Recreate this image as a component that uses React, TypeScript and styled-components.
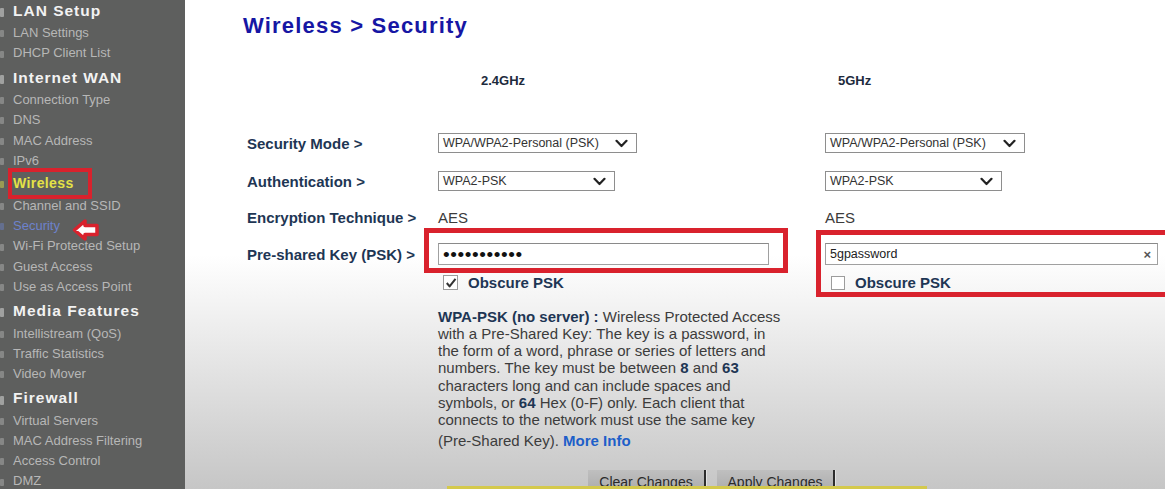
import React from "react";
import styled, { createGlobalStyle } from "styled-components";

const GlobalStyle = createGlobalStyle`
  html, body {
    margin: 0;
    padding: 0;
    width: 1165px;
    height: 489px;
    overflow: hidden;
    background: #ffffff;
  }
  #root { height: 489px; }
  body { font-family: "Liberation Sans", Arial, sans-serif; }
`;

const Page = styled.div`
  display: flex;
  width: 1165px;
  height: 489px;
  overflow: hidden;
`;

/* ---------- Sidebar ---------- */

type NavKind = "heading" | "item" | "active" | "current";

const Sidebar = styled.nav`
  flex: 0 0 185px;
  width: 185px;
  height: 489px;
  background: #5e5f5e;
  overflow: hidden;
`;

const NavList = styled.div`
  display: flex;
  flex-direction: column;
  margin-top: -3px;
`;

const rowHeight: Record<NavKind, string> = {
  heading: "26.2px",
  item: "20.3px",
  current: "20.3px",
  active: "24.7px",
};

const NavRow = styled.div<{ $kind: NavKind }>`
  display: flex;
  align-items: flex-start;
  box-sizing: border-box;
  height: ${(p) => rowHeight[p.$kind]};
  padding-top: ${(p) => (p.$kind === "heading" ? "3px" : p.$kind === "active" ? "1.5px" : "0")};
  line-height: ${(p) => (p.$kind === "heading" ? "22px" : "20.3px")};
  white-space: nowrap;
`;

const navColor: Record<NavKind, string> = {
  heading: "#f2f2f2",
  item: "#b7b7b7",
  current: "#6d82cc",
  active: "#e4e246",
};

/* faint fragment of the neighbouring column, seen at the far left edge */
const EdgeMark = styled.span<{ $kind: NavKind }>`
  flex: 0 0 9px;
  width: 9px;
  display: flex;
  align-items: center;
  height: 100%;
  & > i {
    display: block;
    width: 4px;
    height: ${(p) => (p.$kind === "heading" ? "9px" : "7px")};
    margin-top: ${(p) => (p.$kind === "heading" ? "2px" : "1px")};
    background: ${(p) => navColor[p.$kind]};
    opacity: 0.45;
    border-radius: 1px;
  }
`;

const NavLabel = styled.span<{ $kind: NavKind }>`
  position: relative;
  margin-left: 4px;
  color: ${(p) => navColor[p.$kind]};
  font-size: ${(p) => (p.$kind === "heading" ? "15.5px" : p.$kind === "active" ? "14px" : "13px")};
  font-weight: ${(p) => (p.$kind === "heading" || p.$kind === "active" ? 700 : 400)};
  letter-spacing: ${(p) => (p.$kind === "heading" ? "1px" : p.$kind === "active" ? "0.4px" : "0")};
`;

const NavHighlight = styled.span`
  position: absolute;
  left: -5px;
  top: -4.7px;
  width: 84px;
  height: 31px;
  box-sizing: border-box;
  border: 4px solid #d9222d;
  pointer-events: none;
`;

const PointerArrow = styled.svg`
  position: absolute;
  left: 58px;
  top: 2px;
`;

/* ---------- Main ---------- */

const Main = styled.main`
  flex: 1;
  position: relative;
  box-sizing: border-box;
  height: 489px;
  padding: 13px 0 0 58px;
  overflow: hidden;
  background: linear-gradient(to bottom, #ffffff 0px, #ffffff 255px, #c6c6c6 489px);
`;

const Title = styled.h1`
  margin: 0;
  font-size: 22px;
  line-height: 26px;
  font-weight: 700;
  letter-spacing: 1.2px;
  color: #1616a4;
`;

const Form = styled.div`
  margin: 31px 0 0 4px;
  display: flex;
  flex-direction: column;
`;

const FormRow = styled.div<{ $h: number; $mb?: number }>`
  display: grid;
  grid-template-columns: 191px 387px 1fr;
  height: ${(p) => p.$h}px;
  margin-bottom: ${(p) => p.$mb ?? 0}px;
  align-items: center;
`;

const FreqLabel = styled.div<{ $indent: number }>`
  padding-left: ${(p) => p.$indent}px;
  font-size: 13px;
  font-weight: 700;
  color: #1d2b3d;
`;

const FieldLabel = styled.div`
  font-size: 15px;
  font-weight: 700;
  color: #1e3654;
  white-space: nowrap;
`;

const Cell = styled.div<{ $indent?: number }>`
  position: relative;
  align-self: stretch;
  display: flex;
  align-items: center;
  padding-left: ${(p) => p.$indent ?? 0}px;
  white-space: nowrap;
`;

const SelectBox = styled.div<{ $w: number }>`
  width: ${(p) => p.$w}px;
  height: 20px;
  box-sizing: border-box;
  border: 1px solid #8e8e8e;
  background: #ffffff;
  display: flex;
  align-items: center;
  justify-content: space-between;
  padding: 0 8px 0 4px;
  font-size: 12.5px;
  color: #333333;
`;

const ValueText = styled.span`
  font-size: 15px;
  color: #3b3b3b;
`;

const KeyInput = styled.div<{ $w: number }>`
  width: ${(p) => p.$w}px;
  height: 22px;
  box-sizing: border-box;
  border: 1px solid #a0a0a0;
  border-top-color: #8a8a8a;
  background: #ffffff;
  display: flex;
  align-items: center;
  justify-content: space-between;
  padding: 0 6px 0 4px;
`;

const Dots = styled.span`
  font-size: 19px;
  line-height: 1;
  letter-spacing: 0.6px;
  color: #111111;
`;

const KeyText = styled.span`
  font-size: 12.5px;
  color: #222222;
`;

const ClearMark = styled.span`
  font-size: 13px;
  font-weight: 700;
  color: #555555;
`;

const RedFrame = styled.div<{ $left: number; $top: number; $w: number; $h: number }>`
  position: absolute;
  left: ${(p) => p.$left}px;
  top: ${(p) => p.$top}px;
  width: ${(p) => p.$w}px;
  height: ${(p) => p.$h}px;
  box-sizing: border-box;
  border: 5px solid #d9222d;
  pointer-events: none;
`;

const CheckBox = styled.span<{ $size: number }>`
  display: inline-flex;
  align-items: center;
  justify-content: center;
  width: ${(p) => p.$size}px;
  height: ${(p) => p.$size}px;
  box-sizing: border-box;
  border: 1px solid #9c9c9c;
  background: #ffffff;
`;

const CheckLabel = styled.span`
  margin-left: 10px;
  font-size: 15px;
  font-weight: 700;
  color: #1e3654;
`;

const Description = styled.div`
  margin: 19.5px 0 0 191px;
  width: 370px;
  font-size: 15px;
  line-height: 17.3px;
  color: #3c3c3c;
  white-space: nowrap;
`;

const Strong = styled.b`
  color: #1e3654;
`;

const LastLine = styled.div`
  margin-top: 3px;
`;

const MoreInfo = styled.a`
  font-weight: 700;
  color: #1d5fc9;
  text-decoration: none;
`;

const ButtonArea = styled.div`
  margin: 21px 0 0 204px;
  width: 480px;
`;

const ButtonClip = styled.div`
  display: flex;
  gap: 11px;
  padding-left: 141px;
  height: 16px;
  overflow: hidden;
`;

const ActionButton = styled.button`
  width: 118px;
  height: 24px;
  flex: 0 0 118px;
  padding: 0;
  border: none;
  border-right: 2px solid #2c2c2c;
  box-shadow: 1px 0 0 #e2e2e2;
  background: linear-gradient(to bottom, #bfbfbf, #a9a9a9);
  font-family: "Liberation Sans", Arial, sans-serif;
  font-size: 14px;
  line-height: 24px;
  color: #2b2b2b;
  text-align: center;
`;

const YellowBar = styled.div`
  height: 3px;
  background: #d4c94c;
`;

/* ---------- Icons ---------- */

const Chevron = () => (
  <svg width="13" height="9" viewBox="0 0 13 9">
    <polyline points="1.5,1.8 6.5,7 11.5,1.8" fill="none" stroke="#222" strokeWidth="2.2" strokeLinecap="round" strokeLinejoin="round" />
  </svg>
);

const Tick = () => (
  <svg width="12" height="12" viewBox="0 0 12 12">
    <polyline points="1.8,6 4.6,9.4 10.5,1.8" fill="none" stroke="#333" strokeWidth="2" strokeLinejoin="round" />
  </svg>
);

/* ---------- Data ---------- */

const nav: { kind: NavKind; label: string }[] = [
  { kind: "heading", label: "LAN Setup" },
  { kind: "item", label: "LAN Settings" },
  { kind: "item", label: "DHCP Client List" },
  { kind: "heading", label: "Internet WAN" },
  { kind: "item", label: "Connection Type" },
  { kind: "item", label: "DNS" },
  { kind: "item", label: "MAC Address" },
  { kind: "item", label: "IPv6" },
  { kind: "active", label: "Wireless" },
  { kind: "item", label: "Channel and SSID" },
  { kind: "current", label: "Security" },
  { kind: "item", label: "Wi-Fi Protected Setup" },
  { kind: "item", label: "Guest Access" },
  { kind: "item", label: "Use as Access Point" },
  { kind: "heading", label: "Media Features" },
  { kind: "item", label: "Intellistream (QoS)" },
  { kind: "item", label: "Traffic Statistics" },
  { kind: "item", label: "Video Mover" },
  { kind: "heading", label: "Firewall" },
  { kind: "item", label: "Virtual Servers" },
  { kind: "item", label: "MAC Address Filtering" },
  { kind: "item", label: "Access Control" },
  { kind: "item", label: "DMZ" },
];

export default function App() {
  return (
    <>
      <GlobalStyle />
      <Page>
        <Sidebar>
          <NavList>
            {nav.map((n) => (
              <NavRow key={n.label} $kind={n.kind}>
                <EdgeMark $kind={n.kind}>
                  <i />
                </EdgeMark>
                <NavLabel $kind={n.kind}>
                  {n.label}
                  {n.kind === "active" && <NavHighlight />}
                  {n.kind === "current" && (
                    <PointerArrow width="30" height="24" viewBox="0 0 30 24">
                      <path
                        d="M3.5 12 L14 3 L14 7.5 L26 7.5 L26 16.5 L14 16.5 L14 21 Z"
                        fill="#ffffff"
                        stroke="#d9222d"
                        strokeWidth="3.5"
                        strokeLinejoin="round"
                      />
                    </PointerArrow>
                  )}
                </NavLabel>
              </NavRow>
            ))}
          </NavList>
        </Sidebar>

        <Main>
          <Title>Wireless &gt; Security</Title>

          <Form>
            <FormRow $h={20} $mb={34}>
              <span />
              <FreqLabel $indent={43}>2.4GHz</FreqLabel>
              <FreqLabel $indent={13}>5GHz</FreqLabel>
            </FormRow>

            <FormRow $h={38}>
              <FieldLabel>Security Mode &gt;</FieldLabel>
              <Cell>
                <SelectBox $w={199}>
                  WPA/WPA2-Personal (PSK)
                  <Chevron />
                </SelectBox>
              </Cell>
              <Cell>
                <SelectBox $w={200}>
                  WPA/WPA2-Personal (PSK)
                  <Chevron />
                </SelectBox>
              </Cell>
            </FormRow>

            <FormRow $h={38}>
              <FieldLabel>Authentication &gt;</FieldLabel>
              <Cell>
                <SelectBox $w={177}>
                  WPA2-PSK
                  <Chevron />
                </SelectBox>
              </Cell>
              <Cell>
                <SelectBox $w={177}>
                  WPA2-PSK
                  <Chevron />
                </SelectBox>
              </Cell>
            </FormRow>

            <FormRow $h={34}>
              <FieldLabel>Encryption Technique &gt;</FieldLabel>
              <Cell>
                <ValueText>AES</ValueText>
              </Cell>
              <Cell>
                <ValueText>AES</ValueText>
              </Cell>
            </FormRow>

            <FormRow $h={40}>
              <FieldLabel>Pre-shared Key (PSK) &gt;</FieldLabel>
              <Cell>
                <KeyInput $w={331}>
                  <Dots>•••••••••••</Dots>
                </KeyInput>
                <RedFrame $left={-14} $top={-6} $w={364} $h={45} />
              </Cell>
              <Cell>
                <KeyInput $w={333}>
                  <KeyText>5gpassword</KeyText>
                  <ClearMark>×</ClearMark>
                </KeyInput>
                <RedFrame $left={-9} $top={-4} $w={370} $h={67} />
              </Cell>
            </FormRow>

            <FormRow $h={14}>
              <span />
              <Cell $indent={5}>
                <CheckBox $size={15}>
                  <Tick />
                </CheckBox>
                <CheckLabel>Obscure PSK</CheckLabel>
              </Cell>
              <Cell $indent={6}>
                <CheckBox $size={14} />
                <CheckLabel>Obscure PSK</CheckLabel>
              </Cell>
            </FormRow>

            <Description>
              <Strong>WPA-PSK (no server) :</Strong> Wireless Protected Access
              <br />
              with a Pre-Shared Key: The key is a password, in
              <br />
              the form of a word, phrase or series of letters and
              <br />
              numbers. The key must be between <Strong>8</Strong> and <Strong>63</Strong>
              <br />
              characters long and can include spaces and
              <br />
              symbols, or <Strong>64</Strong> Hex (0-F) only. Each client that
              <br />
              connects to the network must use the same key
              <LastLine>
                (Pre-Shared Key). <MoreInfo href="#">More Info</MoreInfo>
              </LastLine>
            </Description>
          </Form>

          <ButtonArea>
            <ButtonClip>
              <ActionButton type="button">Clear Changes</ActionButton>
              <ActionButton type="button">Apply Changes</ActionButton>
            </ButtonClip>
            <YellowBar />
          </ButtonArea>
        </Main>
      </Page>
    </>
  );
}
